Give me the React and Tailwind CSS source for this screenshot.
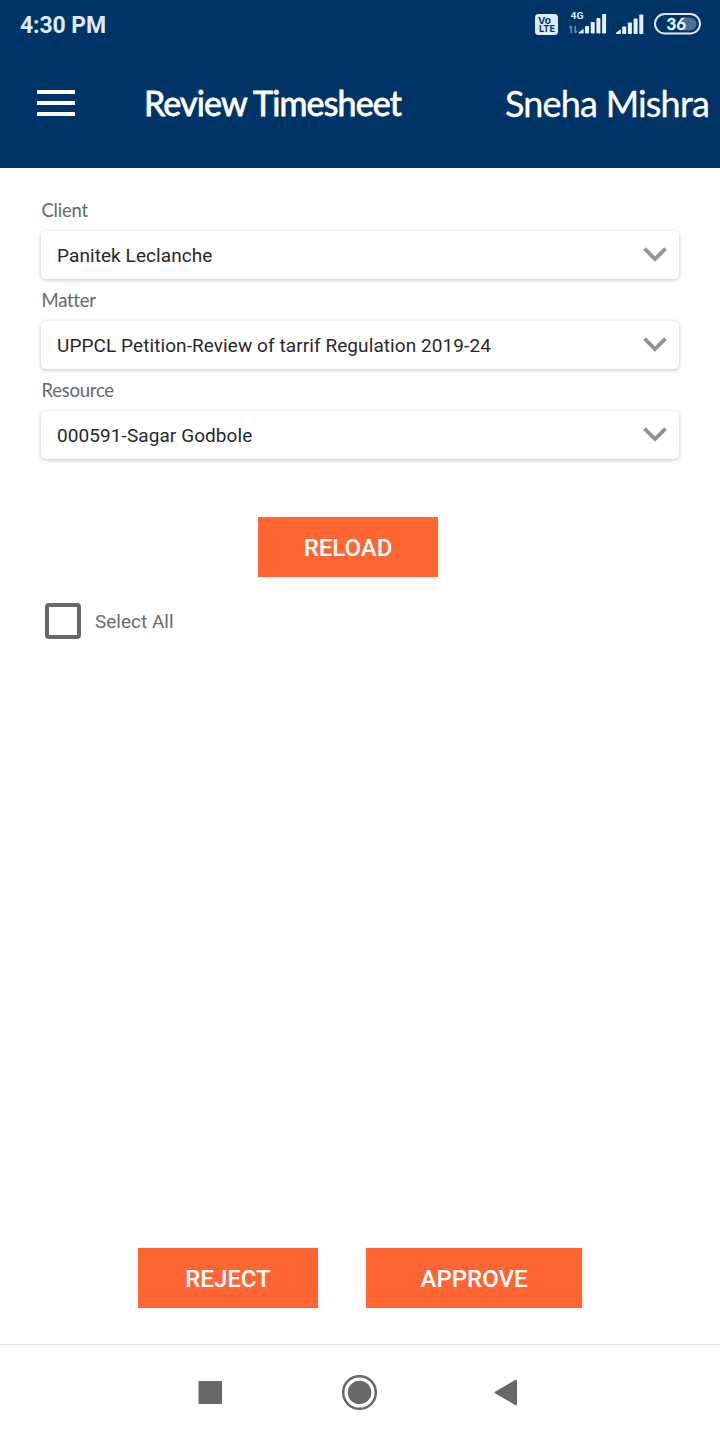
import React from "react";

const fields = [
  { label: "Client", value: "Panitek Leclanche" },
  { label: "Matter", value: "UPPCL Petition-Review of tarrif Regulation 2019-24" },
  { label: "Resource", value: "000591-Sagar Godbole" },
];

function VolteIcon() {
  return (
    <svg className="h-[21px] w-[23px]" viewBox="0 0 23 21">
      <rect width="23" height="21" rx="3.5" fill="#dcebfb" />
      <g fill="#003366" fontFamily="Inter, sans-serif" fontWeight="700">
        <text x="3" y="9.5" fontSize="9.5" textLength="13" lengthAdjust="spacingAndGlyphs">Vo</text>
        <text x="4" y="18.3" fontSize="9.5" textLength="16" lengthAdjust="spacingAndGlyphs">LTE</text>
      </g>
    </svg>
  );
}

function Bars() {
  return (
    <g fill="#e4f0fc">
      <path d="M0 20v-1.2L4.8 15.2V20z" />
      <rect x="6.2" y="12.500" width="4" height="7.500" rx="0.8" />
      <rect x="11.900" y="8.500" width="4" height="11.500" rx="0.8" />
      <rect x="17.600" y="4.500" width="4" height="15.500" rx="0.8" />
      <rect x="23.300" y="0.500" width="4" height="19.500" rx="0.8" />
    </g>
  );
}

function MobileSignal() {
  return (
    <svg className="h-6 w-[38px]" viewBox="0 0 38 24">
      <text x="1.500" y="8.700" fontSize="9" fontWeight="700" fontFamily="Roboto, sans-serif" fill="#dcebfb" textLength="13" lengthAdjust="spacingAndGlyphs">4G</text>
      <path d="M2.200 23.300v-7.300M0.500 18l1.700-2M6.200 16v7M6.200 23l1.700-2" stroke="#6d8cac" strokeWidth="1.500" fill="none" />
      <g transform="translate(9.800 3.500)"><Bars /></g>
    </svg>
  );
}

function Battery() {
  return (
    <svg className="h-[22px] w-[47px]" viewBox="0 0 47 22">
      <path d="M29 4.500h7a6.500 6.500 0 0 1 0 13h-7z" fill="#4c7095" />
      <rect x="1" y="1" width="45" height="19.500" rx="9.750" fill="none" stroke="#dcebfb" strokeWidth="2" />
      <text x="12.500" y="17" fontSize="17.500" fontWeight="700" fontFamily="Lato, sans-serif" fill="#eaf4ff" stroke="#eaf4ff" strokeWidth="0.3" textLength="19.500" lengthAdjust="spacingAndGlyphs">36</text>
    </svg>
  );
}

function StatusBar() {
  return (
    <div className="flex h-12 items-start justify-between pl-5 pr-[19px]">
      <span className="mt-[11px] font-[Roboto,sans-serif] text-[23px] leading-[30px] font-bold tracking-[-0.1px] whitespace-nowrap text-[#dcebfb]">4:30 PM</span>
      <div className="mt-[10px] flex items-start">
        <div className="mt-1 mr-[11px]"><VolteIcon /></div>
        <MobileSignal />
        <svg className="mt-[3.500px] ml-[9px] h-5 w-[28px]" viewBox="0 0 28 20"><Bars /></svg>
        <div className="mt-[3px] ml-[10px]"><Battery /></div>
      </div>
    </div>
  );
}

function Field({ label, value }) {
  return (
    <div>
      <div className="flex h-[42px] items-center pt-[2px] pl-[0.5px] font-[Lato,sans-serif] text-[18.500px] tracking-[-0.25px] text-[#686868]">{label}</div>
      <div className="flex h-12 items-center justify-between rounded-[5px] bg-white pr-3 pl-4 shadow-[0_1px_4px_rgba(0,0,0,0.24)]">
        <span className="pt-[2px] font-[Roboto,sans-serif] text-[19px] tracking-[0.08px] whitespace-nowrap text-[#282828]">{value}</span>
        <svg className="mb-[1px] h-[15px] w-6" viewBox="0 0 24 15" fill="none" stroke="#939393" strokeWidth="3.800">
          <path d="M1.500 1.700L12 12L22.500 1.700" />
        </svg>
      </div>
    </div>
  );
}

function ActionButton({ children, className }) {
  return (
    <button className={"h-[60px] bg-[#ff6634] pt-[2px] font-[Roboto,sans-serif] text-[24px] font-medium text-white shadow-[0_0_2px_rgba(0,0,0,0.12)] " + className}>
      {children}
    </button>
  );
}

export default function App() {
  return (
    <div className="flex h-[1440px] w-[720px] flex-col overflow-hidden bg-white">
      <header className="h-[168px] bg-[#003366]">
        <StatusBar />
        <div className="flex h-[110px] items-center pl-[37px] text-white">
          <div className="flex w-[38px] flex-col gap-[7px]">
            <span className="h-1 bg-white" />
            <span className="h-1 bg-white" />
            <span className="h-1 bg-white" />
          </div>
          <h1 className="mb-[2px] ml-[69px] w-[290px] font-[Lato,sans-serif] text-[34px] tracking-[-0.85px] whitespace-nowrap [-webkit-text-stroke:0.8px_white]">Review Timesheet</h1>
          <span className="ml-[71px] font-[Lato,sans-serif] text-[36px] tracking-[-0.8px] whitespace-nowrap [-webkit-text-stroke:0.3px_white]">Sneha Mishra</span>
        </div>
      </header>
      <main className="flex flex-1 flex-col px-[41px] pt-[21px]">
        {fields.map((f) => <Field key={f.label} {...f} />)}
        <ActionButton className="mt-[58px] ml-[217px] w-[180px]">RELOAD</ActionButton>
        <label className="mt-[26px] ml-1 flex items-center gap-[14px]">
          <span className="size-9 rounded-[4px] border-4 border-[#686868]" />
          <span className="pt-[2px] font-[Roboto,sans-serif] text-[19px] text-[#6b6b6b]">Select All</span>
        </label>
        <div className="mt-auto mb-9 flex gap-12 pl-[97px]">
          <ActionButton className="w-[180px]">REJECT</ActionButton>
          <ActionButton className="w-[216px]">APPROVE</ActionButton>
        </div>
      </main>
      <nav className="flex h-24 items-center border-t border-[#e2e2e2] pl-[198px]">
        <svg className="h-6 w-6" viewBox="0 0 24 24"><rect x="0.500" y="0" width="23.500" height="23" rx="1" fill="#686868" /></svg>
        <svg className="ml-[119px] size-9" viewBox="0 0 36 36">
          <circle cx="18.500" cy="17.500" r="16.300" fill="none" stroke="#686868" strokeWidth="2.500" />
          <circle cx="18.500" cy="17.500" r="11.800" fill="#686868" />
        </svg>
        <svg className="ml-[117px] h-7 w-6" viewBox="0 0 24 28">
          <path d="M1.500 13.500L22 1.700V25.300Z" fill="#686868" stroke="#686868" strokeWidth="2" strokeLinejoin="round" />
        </svg>
      </nav>
    </div>
  );
}
